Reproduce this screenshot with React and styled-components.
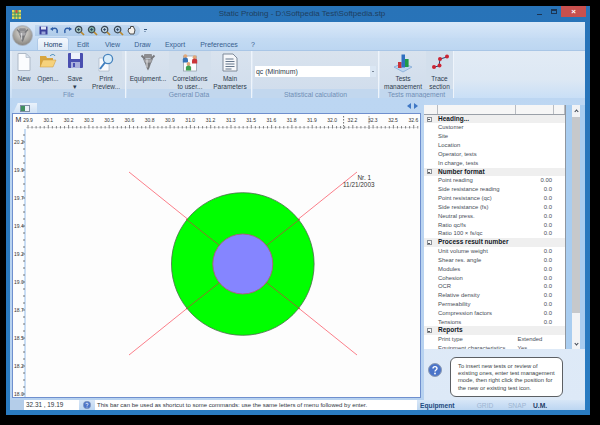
import styled, { createGlobalStyle } from "styled-components";

const Global = createGlobalStyle`
  html, body { margin: 0; background: #000; }
  body { width: 600px; height: 425px; overflow: hidden; font-family: "Liberation Sans", Arial, sans-serif; }
`;

const Win = styled.div`
  width: 584px;
  height: 409px;
  margin: 6px 0 0 6px;
  background: linear-gradient(#2873b8, #2a7cc2);
  display: flex;
  flex-direction: column;
`;

const TitleBar = styled.div`
  height: 16px;
  display: flex;
  align-items: center;
  padding-left: 6px;
`;

const Title = styled.div`
  flex: 1;
  text-align: center;
  font-size: 8px;
  color: #1f3f60;
  padding-left: 52px;
  margin-top: -2px;
`;

const WinButtons = styled.div`
  display: flex;
  align-self: flex-start;
  height: 11px;
`;

const WinBtn = styled.div`
  width: ${(p) => p.$w}px;
  height: 11px;
  display: flex;
  align-items: center;
  justify-content: center;
  background: ${(p) => (p.$close ? "#c9504e" : "transparent")};
  color: #fff;
  font-size: 8px;
  font-weight: 700;
`;

const MinGlyph = styled.div`
  width: 5px;
  height: 1px;
  margin-top: 5px;
  background: #1b3554;
`;

const MaxGlyph = styled.div`
  width: 6px;
  height: 5px;
  box-sizing: border-box;
  border: 1px solid #1b3554;
  border-top-width: 2px;
`;

const Client = styled.div`
  position: relative;
  width: 575px;
  height: 388px;
  margin-left: 4px;
  background: #c7ddf4;
  display: flex;
  flex-direction: column;
`;

const QatRow = styled.div`
  height: 16px;
  background: linear-gradient(#d9e8f8, #c6dcf4);
  padding: 3px 0 0 25px;
  box-sizing: border-box;
  display: flex;
`;

const QatPill = styled.div`
  width: 105px;
  height: 11px;
  border-radius: 0 6px 6px 0;
  background: linear-gradient(#c2d8f0, #aecbe9);
  display: flex;
  align-items: center;
  gap: 2px;
  padding-left: 4px;
  box-sizing: border-box;
`;

const QatMore = styled.div`
  margin: 4px 0 0 4px;
  width: 3px;
  height: 4px;
  border-top: 1px solid #35577f;
  box-sizing: border-box;
  position: relative;
  &::after {
    content: "";
    position: absolute;
    left: 0;
    top: 1px;
    border: 1.5px solid transparent;
    border-top-color: #35577f;
  }
`;

const Orb = styled.div`
  position: absolute;
  z-index: 2;
  left: 2px;
  top: 3px;
  width: 21px;
  height: 21px;
`;

const TabRow = styled.div`
  height: 12px;
  display: flex;
  padding-left: 28px;
  background: linear-gradient(#c4dbf3, #bcd6f1);
`;

const Tab = styled.div`
  width: ${(p) => p.$w}px;
  height: 12px;
  display: flex;
  align-items: center;
  justify-content: center;
  font-size: 7px;
  color: ${(p) => (p.$active ? "#20406b" : "#38608f")};
  background: ${(p) => (p.$active ? "linear-gradient(#f4f8fd, #dfeaf6)" : "transparent")};
  border-radius: 2px 2px 0 0;
  box-shadow: ${(p) => (p.$active ? "0 0 0 0.5px #9dbbe0" : "none")};
`;

const Ribbon = styled.div`
  height: 48px;
  background: linear-gradient(#e2ebf5, #dde8f4 60%, #c9dff6);
  display: flex;
  gap: 2px;
  padding-left: 2px;
  box-sizing: border-box;
  border-top: 1px solid #a9c6e6;
`;

const Group = styled.div`
  width: ${(p) => p.$w}px;
  display: flex;
  flex-direction: column;
  background: linear-gradient(#d9e3ee, #cfdcec);
  box-shadow: 1px 0 0 #eef4fb;
`;

const GroupBody = styled.div`
  flex: 1;
  min-height: 0;
  display: flex;
`;

const GroupLabel = styled.div`
  height: 9px;
  padding-top: 1.5px;
  box-sizing: border-box;
  line-height: 7.5px;
  text-align: center;
  font-size: 6.8px;
  color: #6f8fb7;
  background: #c2d7ee;
`;

const RibbonBtn = styled.div`
  width: ${(p) => p.$w}px;
  display: flex;
  flex-direction: column;
  align-items: center;
  padding-top: 2px;
  box-sizing: border-box;
  background: ${(p) => (p.$shade ? "#d3dfec" : "transparent")};
`;

const BtnIcon = styled.div`
  height: 21.5px;
  flex: none;
  display: flex;
  align-items: flex-start;
  justify-content: center;
`;

const BtnLabel = styled.div`
  flex: none;
  font-size: 6.5px;
  line-height: 8px;
  color: #2c3a4c;
  text-align: center;
  white-space: pre;
`;

const Combo = styled.div`
  width: 121px;
  height: 11px;
  margin: 15px 0 0 2px;
  background: #fff;
  display: flex;
  align-items: center;
  font-size: 6.9px;
  color: #2c3a4c;
  padding-left: 1px;
  box-sizing: border-box;
  justify-content: space-between;
`;

const ComboArrow = styled.div`
  width: 6px;
  height: 11px;
  background: #dbe7f4;
  position: relative;
  &::after {
    content: "";
    position: absolute;
    left: 1.5px;
    top: 5px;
    border: 1.5px solid transparent;
    border-top-color: #1d2b3d;
  }
`;

const Workspace = styled.div`
  flex: 1;
  min-height: 0;
  display: flex;
  background: linear-gradient(#bcd6f2, #b7d2f0);
  padding-left: 2px;
`;

const LeftCol = styled.div`
  width: 409px;
  display: flex;
  flex-direction: column;
`;

const DocStrip = styled.div`
  height: 15px;
  display: flex;
  align-items: flex-end;
  justify-content: space-between;
  padding: 0 3px 0 1px;
`;

const DocTab = styled.div`
  width: 24px;
  height: 10px;
  background: linear-gradient(#eaf2fb, #cfe1f5);
  clip-path: polygon(20% 0, 100% 0, 100% 100%, 0 100%);
  display: flex;
  align-items: center;
  justify-content: center;
`;

const DocThumb = styled.div`
  width: 8px;
  height: 5px;
  background: linear-gradient(90deg, #3f8f5f 50%, #e8eef6 50%);
  border: 0.5px solid #7e8ea3;
`;

const NavArrows = styled.div`
  display: flex;
  gap: 3px;
  align-self: center;
  margin-top: 1px;
`;

const Arrow = styled.div`
  width: 0;
  height: 0;
  border-top: 3px solid transparent;
  border-bottom: 3px solid transparent;
  border-${(p) => (p.$left ? "right" : "left")}: 4px solid #3f77c4;
`;

const Frame = styled.div`
  height: 285px;
  background: #fdfdfd;
  box-shadow: inset 0 0 0 1px #6f8fce;
  svg { display: block; }
`;

const RightCol = styled.div`
  flex: 1;
  min-width: 0;
  margin-left: 3px;
  display: flex;
  flex-direction: column;
  background: linear-gradient(#bcd6f2, #e0ebf8 55%, #dde9f7);
`;

const GridWrap = styled.div`
  height: 244px;
  margin-top: 7px;
  flex: none;
  display: flex;
  background: #a9cdf0;
`;

const PropGrid = styled.div`
  width: 141px;
  background: #fff;
  border-right: 1px solid #8f969f;
  overflow: hidden;
`;

const GridHead = styled.div`
  height: 9.6px;
  display: grid;
  grid-template-columns: 14px 78px 38px 11px;
  box-sizing: border-box;
  border-bottom: 1px solid #9aa0a8;
  background: #f6f6f6;
  & > div { border-right: 1px solid #b8bcc2; }
`;

const Row = styled.div`
  height: 8.83px;
  display: grid;
  grid-template-columns: 14px 78px 36px 13px;
  align-items: center;
  font-size: ${(p) => (p.$section ? "6.5px" : "5.9px")};
  line-height: 8.83px;
  color: ${(p) => (p.$section ? "#11161d" : "#474e58")};
  font-weight: ${(p) => (p.$section ? 700 : 400)};
  background: ${(p) => (p.$section ? "#efefef" : "transparent")};
  white-space: nowrap;
`;

const MinusBox = styled.div`
  width: 5px;
  height: 5px;
  margin-left: 2.5px;
  border: 0.5px solid #8a8f96;
  box-sizing: border-box;
  position: relative;
  background: #f7f7f7;
  &::after {
    content: "";
    position: absolute;
    left: 0.5px;
    right: 0.5px;
    top: 1.7px;
    height: 0.7px;
    background: #555;
  }
`;

const RowValue = styled.div`
  text-align: ${(p) => (p.$left ? "left" : "right")};
  padding-left: ${(p) => (p.$left ? "1.5px" : "0")};
`;

const ScrollBar = styled.div`
  width: 8px;
  margin-left: 6px;
  background: #f2f3f5;
  display: flex;
  flex-direction: column;
`;

const ScrollEnd = styled.div`
  height: 12px;
  flex: none;
  display: flex;
  align-items: center;
  justify-content: center;
`;

const Chevron = styled.div`
  width: 3px;
  height: 3px;
  box-sizing: border-box;
  border-left: 1px solid #3c4450;
  border-top: 1px solid #3c4450;
  transform: rotate(${(p) => (p.$down ? "225deg" : "45deg")});
`;

const ScrollThumb = styled.div`
  height: 196px;
  flex: none;
  background: #c6c8cb;
`;

const ScrollTrack = styled.div`
  flex: 1;
`;

const HelpArea = styled.div`
  display: flex;
  align-items: flex-start;
  padding: 8px 0 0 4px;
`;

const HelpIcon = styled.div`
  width: 14px;
  height: 14px;
  margin: 6px 8px 0 0;
  flex: none;
`;

const Bubble = styled.div`
  width: 113px;
  height: 40px;
  box-sizing: border-box;
  padding: 4.5px 0 0 7px;
  background: #fff;
  border: 1px solid #5c5f63;
  border-radius: 6px;
  font-size: 5.8px;
  line-height: 7.4px;
  color: #3a3f46;
  white-space: pre;
`;

const StatusBar = styled.div`
  height: 10px;
  flex: none;
  display: flex;
  align-items: center;
  background: linear-gradient(#d7e6f7, #bcd6f2);
  font-size: 6.7px;
  white-space: nowrap;
`;

const StatusGap = styled.div`
  width: 14px;
  height: 10px;
  flex: none;
  background: #b4cde9;
`;

const StatusField = styled.div`
  width: ${(p) => p.$w}px;
  height: 10px;
  line-height: 10px;
  flex: none;
  background: #fff;
  color: #2e3640;
  font-size: ${(p) => p.$size}px;
  padding-left: 2px;
  box-sizing: border-box;
  overflow: hidden;
`;

const StatusIcon = styled.div`
  width: 16px;
  height: 10px;
  flex: none;
  display: flex;
  align-items: center;
  justify-content: center;
`;

const StatusCell = styled.div`
  width: ${(p) => p.$w}px;
  flex: none;
  display: flex;
  justify-content: ${(p) => (p.$start ? "flex-start" : "center")};
  padding-left: ${(p) => (p.$start ? "3px" : "0")};
  box-sizing: border-box;
  font-weight: ${(p) => (p.$on ? 700 : 400)};
  color: ${(p) => p.$color};
`;

/* ---- icons ---- */

const Mag = ({ fill = "#8cc0a0" }) => (
  <svg width="11" height="11" viewBox="0 0 11 11">
    <circle cx="4.6" cy="4.6" r="3.2" fill={fill} stroke="#3d4a55" strokeWidth="1.2" />
    <path d="M7 7l3 3" stroke="#b9892f" strokeWidth="1.7" />
    <path d="M3 4.6h3.2M4.6 3v3.2" stroke="#1f3a58" strokeWidth=".8" />
  </svg>
);

const QatIcons = () => (
  <>
    <svg width="9" height="9" viewBox="0 0 9 9">
      <rect x=".5" y=".5" width="8" height="8" fill="#3a3f9a" />
      <rect x="2" y=".5" width="5" height="3" fill="#dfe4f5" />
      <rect x="2.5" y="5.5" width="4" height="3" fill="#9aa5d8" />
    </svg>
    <svg width="10" height="9" viewBox="0 0 10 9">
      <path d="M2 3c4-2 6 0 5 4" fill="none" stroke="#2f5fa8" strokeWidth="1.5" />
      <path d="M0 3l3-2v4z" fill="#2f5fa8" />
    </svg>
    <svg width="10" height="9" viewBox="0 0 10 9">
      <path d="M8 3C4 1 2 3 3 7" fill="none" stroke="#2f5fa8" strokeWidth="1.5" />
      <path d="M10 3L7 1v4z" fill="#2f5fa8" />
    </svg>
    <Mag fill="#a7c7c2" />
    <Mag fill="#7fb3a8" />
    <Mag fill="#c4d8e6" />
    <Mag fill="#b7cfe6" />
    <svg width="11" height="11" viewBox="0 0 11 11">
      <path d="M2 6l1-3 1 1 1-3 1 1 1-1 2 4-1 4H4z" fill="#f4f1ec" stroke="#3a3a3a" strokeWidth=".9" />
    </svg>
  </>
);

const Probe = ({ size = 18 }) => (
  <svg width={size} height={size} viewBox="0 0 18 18">
    <rect x="5" y="1" width="8" height="4" rx="1" fill="#8d8d90" />
    <path d="M2.500 2.500l3.500 3.500M15.500 2.500L12 6" stroke="#77787b" strokeWidth="1.8" />
    <path d="M4.500 6h9l-1.500 4H6z" fill="#a8a8ab" stroke="#66676a" strokeWidth=".5" />
    <path d="M6 10h6l-1.600 5L9 17.500 7.600 15z" fill="#77787b" />
    <path d="M8 6.500v8" stroke="#e2e2e4" strokeWidth="1.100" />
  </svg>
);

const IconNew = () => (
  <svg width="14" height="18" viewBox="0 0 14 18">
    <path d="M1 .5h8l4 4v13H1z" fill="#fbfcfe" stroke="#aeb9c7" />
    <path d="M9 .5v4h4z" fill="#dbe4ef" stroke="#aeb9c7" strokeWidth=".7" />
  </svg>
);

const IconOpen = () => (
  <svg width="18" height="16" viewBox="0 0 18 16">
    <path d="M1 3h6l1 2h6v9H1z" fill="#d8a53e" />
    <path d="M1 14l3-7h13l-3 7z" fill="#f6d27c" stroke="#c9953a" strokeWidth=".5" />
    <path d="M11 3c2-2 4-2 5 0" fill="none" stroke="#3a86b8" strokeWidth="1" />
  </svg>
);

const IconSave = () => (
  <svg width="15" height="15" viewBox="0 0 15 15">
    <rect width="15" height="15" rx="1" fill="#4a4fb0" />
    <rect x="3" width="9" height="6" fill="#eef1fa" />
    <rect x="3" y="9" width="9" height="6" fill="#a9afdc" />
    <rect x="5" y="10" width="2" height="4" fill="#4a4fb0" />
  </svg>
);

const IconPreview = () => (
  <svg width="18" height="19" viewBox="0 0 18 19">
    <path d="M2 5h10v13H2z" fill="#f8fafd" stroke="#a9b6c6" strokeWidth=".7" />
    <circle cx="11" cy="6" r="4.600" fill="#d8ecfa" stroke="#4683bd" strokeWidth="1.300" />
    <path d="M8 9.500L3 16" stroke="#3f7fc0" strokeWidth="2" />
  </svg>
);

const Person = ({ x, y, c }) => (
  <g>
    <circle cx={x} cy={y} r="1.900" fill="#e3a878" />
    <path d={`M${x - 2.6} ${y + 6.4}v-3a2.600 2 0 0 1 5.200 0v3z`} fill={c} />
  </g>
);

const IconCorrelations = () => (
  <svg width="18" height="19" viewBox="0 0 18 19">
    <rect x="2.500" y="3" width="13" height="15" fill="#fbfcfe" stroke="#8b97a6" strokeWidth=".7" />
    <Person x={4.4} y={3.2} c="#3674b8" />
    <Person x={13.6} y={4.2} c="#c9353a" />
    <Person x={7.5} y={11} c="#3ba04d" />
  </svg>
);

const IconMain = () => (
  <svg width="16" height="19" viewBox="0 0 16 19">
    <path d="M1 1h10l4 4v13H1z" fill="#f5f7fa" stroke="#7f8a99" />
    <path d="M3.500 6h8M3.500 8.500h9M3.500 11h9M3.500 13.500h9M3.500 16h6" stroke="#55687f" strokeWidth=".9" />
  </svg>
);

const IconTests = () => (
  <svg width="20" height="20" viewBox="0 0 20 20">
    <path d="M1 14l9-4 9 4-9 5z" fill="#bcd5ef" stroke="#6d9ad0" strokeWidth=".6" />
    <rect x="5" y="9" width="3.600" height="6" fill="#c9343a" />
    <rect x="8.500" y="1.500" width="3.500" height="13" fill="#2f6fc0" />
    <rect x="12" y="6" width="3.600" height="8" fill="#1f9a48" />
  </svg>
);

const IconTrace = () => (
  <svg width="18" height="18" viewBox="0 0 18 18">
    <path d="M3 14l5-1 1-7 7-2" fill="none" stroke="#2d3f6a" strokeWidth="1" />
    <circle cx="3" cy="14" r="2" fill="#cc2433" />
    <circle cx="8.500" cy="12.500" r="2" fill="#cc2433" />
    <circle cx="9" cy="6" r="2" fill="#cc2433" />
    <circle cx="16" cy="3.500" r="2" fill="#cc2433" />
  </svg>
);

const HelpGlyph = ({ size }) => (
  <svg width={size} height={size} viewBox="0 0 14 14">
    <circle cx="7" cy="7" r="6.500" fill="#4a74c9" stroke="#8d9bb3" />
    <path d="M5 5.500c0-2.500 4-2.500 4 0 0 1.500-2 1.500-2 3" fill="none" stroke="#fff" strokeWidth="1.400" />
    <circle cx="7" cy="10.500" r=".9" fill="#fff" />
  </svg>
);

/* ---- drawing: ruler ticks and the section plot ---- */

const topLabels = ["29.9", "30.1", "30.2", "30.3", "30.5", "30.6", "30.8", "30.9", "31.0", "31.2", "31.3", "31.5", "31.6", "31.8", "31.9", "32.0", "32.2", "32.3", "32.5", "32.6"];
const leftLabels = ["20.2", "19.9", "19.7", "19.4", "19.2", "19.0", "18.7", "18.5", "18.2", "18.0"];
const rulerFont = "Liberation Sans";

function Drawing() {
  const xTicks = [];
  for (let x = 28, i = 0; x < 420; x += 4.06, i++) xTicks.push([x, i % 5 === 0]);
  const yTicks = [];
  for (let y = 135, i = 0; y < 397; y += 7, i++) yTicks.push([y, i % 4 === 1]);
  return (
    <svg width="408" height="285" viewBox="12 113 408 285">
      <path d="M25 397V129" stroke="#a7c8ee" strokeWidth="1.200" />
      <text x="15.500" y="122" fontSize="7" fill="#222" fontFamily={rulerFont}>M</text>
      {topLabels.map((t, i) => (
        <text key={t} x={28 + i * 20.28} y="122" fontSize="5" fill="#333" textAnchor="middle" fontFamily={rulerFont}>{t}</text>
      ))}
      {leftLabels.map((t, i) => (
        <text key={t} x="14" y={144 + i * 28} fontSize="5" fill="#333" fontFamily={rulerFont}>{t}</text>
      ))}
      <path d="M26 127.500H417" stroke="#c4c8cd" strokeWidth=".6" />
      {xTicks.map(([x, big]) => (
        <path key={x} d={`M${x} ${big ? 125 : 126}V128.500`} stroke="#555" strokeWidth=".7" />
      ))}
      {yTicks.map(([y, big]) => (
        <path key={y} d={`M${big ? 22 : 23} ${y}H25`} stroke="#555" strokeWidth=".8" />
      ))}
      <path d="M343.600 116V129" stroke="#333" strokeWidth=".7" strokeDasharray="1.500 1.500" />
      <path d="M369 116V129" stroke="#555" strokeWidth=".6" strokeDasharray="1.500 1.500" />

      <path d="M129 172L357 355M129 355L357 172" stroke="#fb7f8a" strokeWidth="1" />
      <circle cx="242.800" cy="264" r="71.300" fill="#00ff00" stroke="#4b6b4b" strokeWidth=".8" />
      <path d="M186 219L300 309M186 309L300 219" stroke="#b0503a" strokeWidth=".8" />
      <circle cx="242.800" cy="264" r="30" fill="#8585ff" stroke="#b05a7a" strokeWidth=".9" />

      <text x="357.500" y="179.500" fontSize="6.400" fill="#333" fontFamily={rulerFont}>Nr. 1</text>
      <text x="343" y="187" fontSize="6.400" fill="#333" fontFamily={rulerFont}>11/21/2003</text>
    </svg>
  );
}

/* ---- data ---- */

const tabs = [["Home", 30, true], ["Edit", 30], ["View", 29], ["Draw", 31], ["Export", 34], ["Preferences", 54], ["?", 14]];

const rows = [
  { s: "Heading..." }, { n: "Customer" }, { n: "Site" }, { n: "Location" }, { n: "Operator, tests" }, { n: "In charge, tests" },
  { s: "Number format" }, { n: "Point reading", v: "0.00" }, { n: "Side resistance reading", v: "0.0" }, { n: "Point resistance (qc)", v: "0.0" },
  { n: "Side resistance (fs)", v: "0.0" }, { n: "Neutral press.", v: "0.0" }, { n: "Ratio qc/fs", v: "0.0" }, { n: "Ratio 100 × fs/qc", v: "0.0" },
  { s: "Process result number" }, { n: "Unit volume weight", v: "0.0" }, { n: "Shear res. angle", v: "0.0" }, { n: "Modules", v: "0.0" },
  { n: "Cohesion", v: "0.0" }, { n: "OCR", v: "0.0" }, { n: "Relative density", v: "0.0" }, { n: "Permeability", v: "0.0" },
  { n: "Compression factors", v: "0.0" }, { n: "Tensions", v: "0.0" },
  { s: "Reports" }, { n: "Print type", v: "Extended", left: true }, { n: "Equipment characteristics", v: "Yes", left: true },
];

export default function App() {
  return (
    <Win>
      <Global />
      <TitleBar>
        <svg width="9" height="9" viewBox="0 0 9 9">
          <rect width="9" height="9" fill="#e8d45a" />
          <path d="M0 3h9M0 6h9M3 0v9M6 0v9" stroke="#2f8f6a" strokeWidth="1" />
          <rect x="3.500" width="2" height="3" fill="#c9503a" />
        </svg>
        <Title>Static Probing - D:\Softpedia Test\Softpedia.stp</Title>
        <WinButtons>
          <WinBtn $w={16}><MinGlyph /></WinBtn>
          <WinBtn $w={14}><MaxGlyph /></WinBtn>
          <WinBtn $w={25} $close>×</WinBtn>
          <WinBtn $w={4} />
        </WinButtons>
      </TitleBar>
      <Client>
        <QatRow>
          <QatPill><QatIcons /></QatPill>
          <QatMore />
        </QatRow>
        <Orb>
          <svg width="21" height="21" viewBox="0 0 21 21">
            <defs>
              <radialGradient id="orb" cx=".5" cy=".35" r=".7">
                <stop offset="0" stopColor="#e8e6e2" />
                <stop offset="1" stopColor="#7d7a74" />
              </radialGradient>
            </defs>
            <circle cx="10.500" cy="10.500" r="10" fill="url(#orb)" stroke="#a9b4c2" strokeWidth=".8" />
            <g transform="translate(3 2.500)"><Probe size={15} /></g>
          </svg>
        </Orb>
        <TabRow>
          {tabs.map(([t, w, a]) => <Tab key={t} $w={w} $active={a}>{t}</Tab>)}
        </TabRow>
        <Ribbon>
          <Group $w={113}>
            <GroupBody>
              <RibbonBtn $w={24}><BtnIcon><IconNew /></BtnIcon><BtnLabel>New</BtnLabel></RibbonBtn>
              <RibbonBtn $w={24}><BtnIcon><IconOpen /></BtnIcon><BtnLabel>Open...</BtnLabel></RibbonBtn>
              <RibbonBtn $w={30}><BtnIcon><IconSave /></BtnIcon><BtnLabel>{"Save\n▾"}</BtnLabel></RibbonBtn>
              <RibbonBtn $w={32} $shade><BtnIcon><IconPreview /></BtnIcon><BtnLabel>{"Print\nPreview..."}</BtnLabel></RibbonBtn>
            </GroupBody>
            <GroupLabel>File</GroupLabel>
          </Group>
          <Group $w={124}>
            <GroupBody>
              <RibbonBtn $w={42}><BtnIcon><Probe /></BtnIcon><BtnLabel>Equipment...</BtnLabel></RibbonBtn>
              <RibbonBtn $w={42} $shade><BtnIcon><IconCorrelations /></BtnIcon><BtnLabel>{"Correlations\nto user..."}</BtnLabel></RibbonBtn>
              <RibbonBtn $w={38}><BtnIcon><IconMain /></BtnIcon><BtnLabel>{"Main\nParameters"}</BtnLabel></RibbonBtn>
            </GroupBody>
            <GroupLabel>General Data</GroupLabel>
          </Group>
          <Group $w={125}>
            <GroupBody>
              <Combo>qc (Minimum)<ComboArrow /></Combo>
            </GroupBody>
            <GroupLabel>Statistical calculation</GroupLabel>
          </Group>
          <Group $w={73}>
            <GroupBody>
              <RibbonBtn $w={46}><BtnIcon><IconTests /></BtnIcon><BtnLabel>{"Tests\nmanagement"}</BtnLabel></RibbonBtn>
              <RibbonBtn $w={27} $shade><BtnIcon><IconTrace /></BtnIcon><BtnLabel>{"Trace\nsection"}</BtnLabel></RibbonBtn>
            </GroupBody>
            <GroupLabel>Tests management</GroupLabel>
          </Group>
        </Ribbon>
        <Workspace>
          <LeftCol>
            <DocStrip>
              <DocTab><DocThumb /></DocTab>
              <NavArrows><Arrow $left /><Arrow /></NavArrows>
            </DocStrip>
            <Frame><Drawing /></Frame>
          </LeftCol>
          <RightCol>
            <GridWrap>
              <PropGrid>
                <GridHead><div /><div /><div /><div /></GridHead>
                {rows.map((r, i) => r.s ? (
                  <Row key={i} $section><MinusBox /><div>{r.s}</div></Row>
                ) : (
                  <Row key={i}><div /><div>{r.n}</div><RowValue $left={r.left}>{r.v}</RowValue></Row>
                ))}
              </PropGrid>
              <ScrollBar>
                <ScrollEnd><Chevron /></ScrollEnd>
                <ScrollThumb />
                <ScrollTrack />
                <ScrollEnd><Chevron $down /></ScrollEnd>
              </ScrollBar>
            </GridWrap>
            <HelpArea>
              <HelpIcon><HelpGlyph size={14} /></HelpIcon>
              <Bubble>{"To insert new tests or review of\nexisting ones, enter test management\nmode, then right click the position for\nthe new or existing test icon."}</Bubble>
            </HelpArea>
          </RightCol>
        </Workspace>
        <StatusBar>
          <StatusGap />
          <StatusField $w={55} $size={6.4}>32.31 , 19.19</StatusField>
          <StatusIcon><HelpGlyph size={8} /></StatusIcon>
          <StatusField $w={322} $size={6}>This bar can be used as shortcut to some commands: use the same letters of menu followed by enter.</StatusField>
          <StatusCell $w={54} $on $start $color="#1d4a80">Equipment</StatusCell>
          <StatusCell $w={28} $color="#9db5d2">GRID</StatusCell>
          <StatusCell $w={36} $color="#9db5d2">SNAP</StatusCell>
          <StatusCell $w={10} $on $color="#1d3a66">U.M.</StatusCell>
        </StatusBar>
      </Client>
    </Win>
  );
}
